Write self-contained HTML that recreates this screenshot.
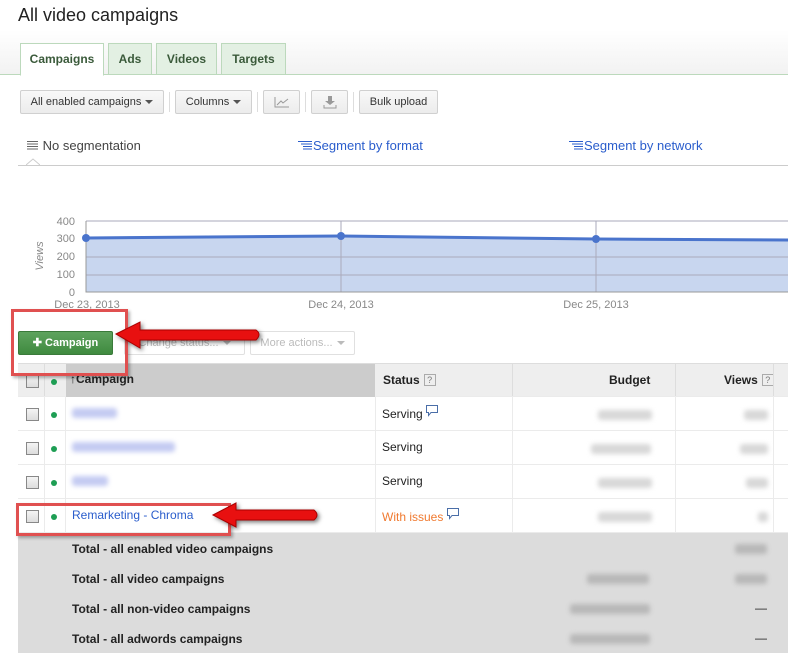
<!DOCTYPE html>
<html><head><meta charset="utf-8"><style>
*{margin:0;padding:0;box-sizing:border-box}
body{width:788px;height:662px;overflow:hidden;background:#fff;font-family:"Liberation Sans",Arial,sans-serif;font-size:12px;color:#222;position:relative}
.a{position:absolute}
.tab{position:absolute;top:43px;height:32px;border:1px solid #bcd9bc;background:#e3f0e3;color:#3a5a3a;font-weight:bold;font-size:12px;text-align:center;line-height:31px}
.btn{position:absolute;top:90px;height:24px;border:1px solid #d0d0d0;background:linear-gradient(#f8f8f8,#ececec);border-radius:2px;font-size:11px;line-height:22px;text-align:center;color:#333}
.sep{position:absolute;top:92px;width:1px;height:20px;background:#ddd}
.caret{display:inline-block;width:0;height:0;border-left:4px solid transparent;border-right:4px solid transparent;border-top:4px solid #555;vertical-align:middle;margin-left:4px}
.row{position:absolute;left:18px;width:770px;height:34px;border-bottom:1px solid #ebebeb}
.cb{position:absolute;left:8px;top:11px;width:13px;height:13px;border:1px solid #888;background:linear-gradient(#f4f4f4,#ddd)}
.dot{position:absolute;left:33px;top:15px;width:6px;height:6px;border-radius:50%;background:#1e9e54}
.vl{position:absolute;top:0;bottom:0;width:1px;background:#ebebeb}
.blur{position:absolute;height:10px;background:#d8d8d8;filter:blur(2.5px);border-radius:3px}
.bl{position:absolute;height:10px;background:#c4cbf2;filter:blur(2.5px);border-radius:3px}
.tot{position:absolute;left:72px;font-weight:bold;font-size:12px}
.q{display:inline-block;width:12px;height:12px;border:1px solid #aaa;font-size:9px;line-height:10px;text-align:center;color:#777;font-weight:normal;vertical-align:1px;margin-left:4px}
.ic{display:inline-block;width:11px;vertical-align:0}
</style></head><body>
<div class="a" style="left:18px;top:5px;font-size:18px;color:#222">All video campaigns</div>
<div class="a" style="left:0;top:30px;width:788px;height:44px;background:linear-gradient(#fff,#f2f2f2)"></div>
<div class="a" style="left:0;top:74px;width:788px;height:1px;background:#bcd9bc"></div>
<div class="tab" style="left:20px;width:84px;background:#fff;border-bottom-color:#fff;height:33px">Campaigns</div>
<div class="tab" style="left:108px;width:44px">Ads</div>
<div class="tab" style="left:156px;width:61px">Videos</div>
<div class="tab" style="left:221px;width:65px">Targets</div>

<div class="btn" style="left:20px;width:144px">All enabled campaigns<span class="caret"></span></div>
<div class="sep" style="left:169px"></div>
<div class="btn" style="left:175px;width:77px">Columns<span class="caret"></span></div>
<div class="sep" style="left:257px"></div>
<div class="btn" style="left:263px;width:37px"><svg width="16" height="12" style="margin-top:5px"><path d="M1 1V11H15" stroke="#999" fill="none"/><path d="M3 9L7 5L9 7L14 3" stroke="#999" fill="none"/></svg></div>
<div class="sep" style="left:305px"></div>
<div class="btn" style="left:311px;width:37px"><svg width="14" height="14" style="margin-top:4px"><path d="M5 1H9V6H12L7 10L2 6H5Z" fill="#999"/><path d="M1 10V13H13V10" stroke="#999" fill="none"/></svg></div>
<div class="sep" style="left:353px"></div>
<div class="btn" style="left:359px;width:79px">Bulk upload</div>

<div class="a" style="left:27px;top:138px;font-size:13px;color:#444"><svg width="12" height="10"><path d="M0 1.5H11M0 4H11M0 6.5H11M0 9H11" stroke="#666"/></svg> No segmentation</div>
<div class="a" style="left:298px;top:138px;font-size:13px;color:#2a5dcc"><svg width="15" height="10"><path d="M0 1.5H14M3 4H14M5 6.5H14M5 9H14" stroke="#2a5dcc"/></svg>Segment by format</div>
<div class="a" style="left:569px;top:138px;font-size:13px;color:#2a5dcc"><svg width="15" height="10"><path d="M0 1.5H14M3 4H14M5 6.5H14M5 9H14" stroke="#2a5dcc"/></svg>Segment by network</div>
<div class="a" style="left:18px;top:165px;width:770px;height:1px;background:#ccc"></div>
<svg class="a" style="left:26px;top:158px" width="14" height="8"><path d="M0 7L7 1L14 7" stroke="#ccc" fill="#fff"/></svg>

<svg class="a" style="left:0;top:210px" width="788" height="105">
<g font-family="Liberation Sans" font-size="11" fill="#888">
<text x="75" y="15" text-anchor="end">400</text><text x="75" y="32" text-anchor="end">300</text><text x="75" y="50" text-anchor="end">200</text><text x="75" y="68" text-anchor="end">100</text><text x="75" y="86" text-anchor="end">0</text>
<text x="87" y="98" text-anchor="middle">Dec 23, 2013</text><text x="341" y="98" text-anchor="middle">Dec 24, 2013</text><text x="596" y="98" text-anchor="middle">Dec 25, 2013</text>
<text transform="translate(43,46) rotate(-90)" text-anchor="middle" font-style="italic">Views</text>
</g>
<path d="M86 28L341 26L596 29L788 30V82H86Z" fill="#c8d6ef"/>
<g stroke="#aab" stroke-width="1"><path d="M86 11H788M86 47H788M86 65H788"/><path d="M341 11V82M596 11V82"/></g>
<path d="M86 11V82H788" stroke="#999" fill="none"/>
<path d="M86 28L341 26L596 29L788 30" stroke="#4a74cc" stroke-width="3" fill="none"/>
<g fill="#4a74cc"><circle cx="86" cy="28" r="4"/><circle cx="341" cy="26" r="4"/><circle cx="596" cy="29" r="4"/></g>
</svg>

<div class="a" style="left:18px;top:331px;width:95px;height:24px;background:linear-gradient(#5ea35e,#3f8a3f);border:1px solid #3a7a3a;border-radius:2px;color:#fff;font-weight:bold;font-size:11px;line-height:22px;text-align:center">&#10010; Campaign</div>
<div class="btn" style="top:331px;left:124px;width:121px;color:#bbb;border-color:#e0e0e0;background:#fff">Change status...<span class="caret" style="border-top-color:#bbb"></span></div>
<div class="btn" style="top:331px;left:250px;width:105px;color:#bbb;border-color:#e0e0e0;background:#fff">More actions...<span class="caret" style="border-top-color:#bbb"></span></div>

<div class="row" style="top:363px;height:34px;background:#eee;border-top:1px solid #ddd">
<div class="a" style="left:48px;top:0;width:309px;height:33px;background:#ccc"></div>
<div class="cb"></div><div class="dot"></div>
<div class="a" style="left:52px;top:8px;font-weight:bold;font-size:12px">&#8593;Campaign</div>
<div class="a" style="left:365px;top:9px;font-weight:bold">Status<span class="q">?</span></div>
<div class="a" style="left:591px;top:9px;font-weight:bold">Budget</div>
<div class="a" style="left:706px;top:9px;font-weight:bold">Views<span class="q">?</span></div>
<div class="vl" style="left:26px;background:#ddd"></div><div class="vl" style="left:494px;background:#ddd"></div><div class="vl" style="left:657px;background:#ddd"></div><div class="vl" style="left:755px;background:#ddd"></div>
</div>
<div class="row" style="top:397px"><div class="cb"></div><div class="dot"></div><div class="bl" style="left:54px;top:11px;width:45px"></div><div class="a" style="left:364px;top:8px">Serving <svg width="12" height="12" style="vertical-align:1px"><path d="M0.5 0.5H11.5V7.5H5L2.5 10.5V7.5H0.5Z" fill="#fff" stroke="#4a6ea8"/></svg></div><div class="blur" style="left:580px;top:13px;width:54px"></div><div class="blur" style="left:726px;top:13px;width:24px"></div><div class="vl" style="left:26px"></div><div class="vl" style="left:47px"></div><div class="vl" style="left:357px"></div><div class="vl" style="left:494px"></div><div class="vl" style="left:657px"></div><div class="vl" style="left:755px"></div></div>
<div class="row" style="top:431px"><div class="cb"></div><div class="dot"></div><div class="bl" style="left:54px;top:11px;width:103px"></div><div class="a" style="left:364px;top:9px">Serving</div><div class="blur" style="left:573px;top:13px;width:60px"></div><div class="blur" style="left:722px;top:13px;width:28px"></div><div class="vl" style="left:26px"></div><div class="vl" style="left:47px"></div><div class="vl" style="left:357px"></div><div class="vl" style="left:494px"></div><div class="vl" style="left:657px"></div><div class="vl" style="left:755px"></div></div>
<div class="row" style="top:465px"><div class="cb"></div><div class="dot"></div><div class="bl" style="left:54px;top:11px;width:36px"></div><div class="a" style="left:364px;top:9px">Serving</div><div class="blur" style="left:580px;top:13px;width:54px"></div><div class="blur" style="left:728px;top:13px;width:22px"></div><div class="vl" style="left:26px"></div><div class="vl" style="left:47px"></div><div class="vl" style="left:357px"></div><div class="vl" style="left:494px"></div><div class="vl" style="left:657px"></div><div class="vl" style="left:755px"></div></div>
<div class="row" style="top:499px"><div class="cb"></div><div class="dot"></div><div class="a" style="left:54px;top:9px;color:#2a5dcc">Remarketing - Chroma</div><div class="a" style="left:364px;top:9px;color:#f07a30">With issues <svg width="12" height="12" style="vertical-align:1px"><path d="M0.5 0.5H11.5V7.5H5L2.5 10.5V7.5H0.5Z" fill="#fff" stroke="#4a6ea8"/></svg></div><div class="blur" style="left:580px;top:13px;width:54px"></div><div class="blur" style="left:740px;top:13px;width:10px"></div><div class="vl" style="left:26px"></div><div class="vl" style="left:47px"></div><div class="vl" style="left:357px"></div><div class="vl" style="left:494px"></div><div class="vl" style="left:657px"></div><div class="vl" style="left:755px"></div></div>

<div class="a" style="left:18px;top:533px;width:770px;height:120px;background:#dcdcdc"></div>
<div class="tot" style="top:542px">Total - all enabled video campaigns</div>
<div class="tot" style="top:572px">Total - all video campaigns</div>
<div class="tot" style="top:602px">Total - all non-video campaigns</div>
<div class="tot" style="top:632px">Total - all adwords campaigns</div>
<div class="blur" style="left:735px;top:544px;width:32px;background:#b8b8b8"></div>
<div class="blur" style="left:587px;top:574px;width:62px;background:#b8b8b8"></div><div class="blur" style="left:735px;top:574px;width:32px;background:#b8b8b8"></div>
<div class="blur" style="left:570px;top:604px;width:80px;background:#b8b8b8"></div><div class="a" style="left:755px;top:601px">—</div>
<div class="blur" style="left:570px;top:634px;width:80px;background:#b8b8b8"></div><div class="a" style="left:755px;top:631px">—</div>

<div class="a" style="left:11px;top:309px;width:117px;height:67px;border:3px solid #e05050;box-shadow:2px 2px 3px rgba(0,0,0,.3)"></div>
<div class="a" style="left:16px;top:503px;width:215px;height:33px;border:3px solid #e05050;box-shadow:2px 2px 3px rgba(0,0,0,.3)"></div>
<svg class="a" style="left:110px;top:318px" width="160" height="40"><path d="M6 16L30 4V12H146Q152 16 146 22H30V30Z" fill="#e81010" stroke="#a00" stroke-width="1" style="filter:drop-shadow(2px 2px 2px rgba(0,0,0,.5))"/></svg>
<svg class="a" style="left:208px;top:500px" width="120" height="32"><path d="M5 15L28 3V10H106Q112 15 106 20H28V27Z" fill="#e81010" stroke="#a00" stroke-width="1" style="filter:drop-shadow(2px 2px 2px rgba(0,0,0,.5))"/></svg>
</body></html>
